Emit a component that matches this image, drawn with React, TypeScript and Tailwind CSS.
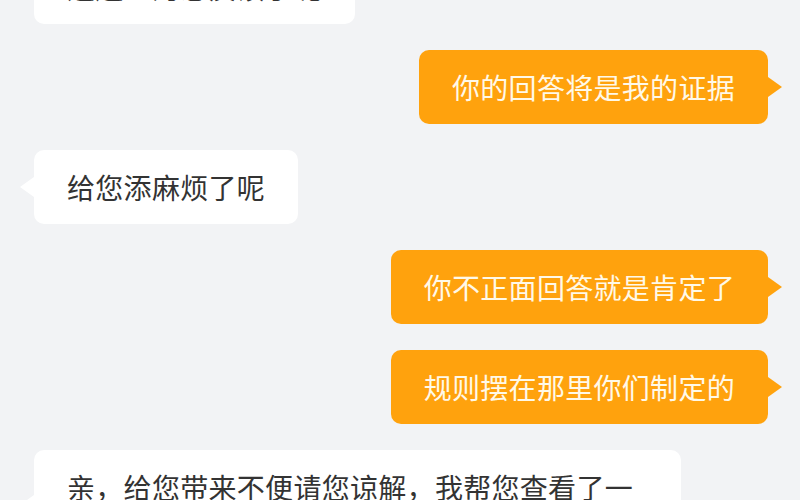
import React from 'react';

type Msg = { id: number; side: 'left' | 'right'; text: string };

const messages: Msg[] = [
  { id: 0, side: 'left', text: '这边已为您反馈了呢' },
  { id: 1, side: 'right', text: '你的回答将是我的证据' },
  { id: 2, side: 'left', text: '给您添麻烦了呢' },
  { id: 3, side: 'right', text: '你不正面回答就是肯定了' },
  { id: 4, side: 'right', text: '规则摆在那里你们制定的' },
  { id: 5, side: 'left', text: '亲，给您带来不便请您谅解，我帮您查看了一下您的订单，目前已经在处理中了' },
];

function Bubble({ msg, first }: { msg: Msg; first: boolean }) {
  const right = msg.side === 'right';
  return (
    <div className={`flex ${right ? 'justify-end pr-[32px]' : 'justify-start pl-[34px]'} ${first ? '-mt-[50px]' : ''}`}>
      <div
        className={`relative max-w-[647px] rounded-[10px] px-[33px] py-[19px] text-[28px] leading-[36px] tracking-[0.3px] ${
          right ? 'bg-[#ffa20d] text-[#fff9e8]' : 'bg-white text-[#333333]'
        }`}
      >
        {right ? (
          <span className="absolute right-[-14px] top-1/2 -translate-y-1/2 w-0 h-0 border-y-[10px] border-y-transparent border-l-[14px] border-l-[#ffa20d]" />
        ) : (
          <span className="absolute left-[-14px] top-1/2 -translate-y-1/2 w-0 h-0 border-y-[10px] border-y-transparent border-r-[14px] border-r-white" />
        )}
        {msg.text}
      </div>
    </div>
  );
}

export default function App() {
  return (
    <div
      className="w-[800px] h-[500px] overflow-hidden bg-[#f2f3f5]"
      style={{ fontFamily: '"Noto Sans CJK SC", "Noto Sans", sans-serif' }}
    >
      <div className="flex flex-col gap-[26px]">
        {messages.map((m, i) => (
          <Bubble key={m.id} msg={m} first={i === 0} />
        ))}
      </div>
    </div>
  );
}
